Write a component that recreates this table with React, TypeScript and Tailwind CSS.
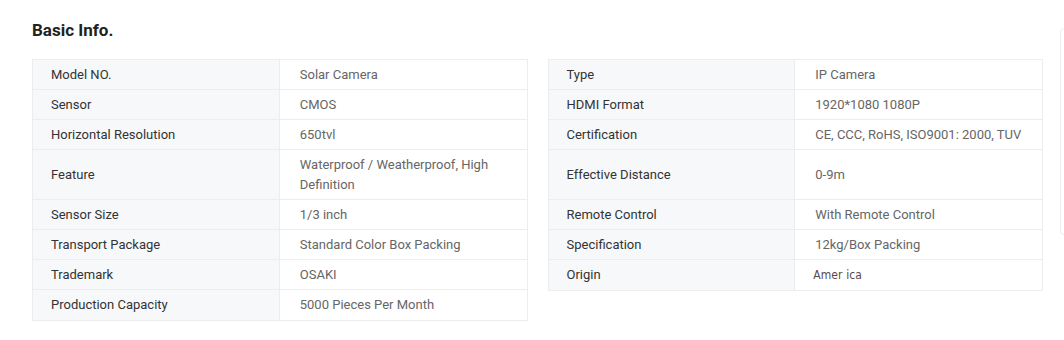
import React from "react";

type Row = { label: string; value: React.ReactNode; tall?: boolean };

const left: Row[] = [
  { label: "Model NO.", value: "Solar Camera" },
  { label: "Sensor", value: "CMOS" },
  { label: "Horizontal Resolution", value: "650tvl" },
  { label: "Feature", value: "Waterproof / Weatherproof, High Definition", tall: true },
  { label: "Sensor Size", value: "1/3 inch" },
  { label: "Transport Package", value: "Standard Color Box Packing" },
  { label: "Trademark", value: "OSAKI" },
  { label: "Production Capacity", value: "5000 Pieces Per Month" },
];

const right: Row[] = [
  { label: "Type", value: "IP Camera" },
  { label: "HDMI Format", value: "1920*1080 1080P" },
  { label: "Certification", value: "CE, CCC, RoHS, ISO9001: 2000, TUV" },
  { label: "Effective Distance", value: "0-9m", tall: true },
  { label: "Remote Control", value: "With Remote Control" },
  { label: "Specification", value: "12kg/Box Packing" },
  {
    label: "Origin",
    value: (
      <span
        className="ml-[-2px] text-[12px] tracking-[0.1px] text-[#5b4a4a]"
        style={{ fontFamily: '"DejaVu Sans Condensed", "Liberation Sans Narrow", sans-serif' }}
      >
        Amer ica
      </span>
    ),
  },
];

function Table({ rows }: { rows: Row[] }) {
  return (
    <div className="flex-1 border border-[#ebedf0] self-start">
      {rows.map((r, i) => (
        <div
          key={r.label}
          className={`grid grid-cols-2 ${i < rows.length - 1 ? "border-b border-[#ebedf0]" : ""} ${r.tall ? "min-h-[50px]" : "min-h-[30px]"}`}
        >
          <div className="flex items-center bg-[#f7f8fa] border-r border-[#ebedf0] pl-[18px] pr-3 text-[13px] leading-5 text-[#333]">
            {r.label}
          </div>
          <div className="flex items-center pl-[20px] pr-[16px] py-[4.5px] text-[13px] leading-5 text-[#666]">
            {r.value}
          </div>
        </div>
      ))}
    </div>
  );
}

export default function App() {
  return (
    <div
      className="w-[1064px] h-[340px] overflow-hidden bg-white flex"
      style={{ fontFamily: 'Roboto, "Liberation Sans", sans-serif' }}
    >
      <div className="w-[1060px] shrink-0 pl-[32px] pr-[17px] pt-[18px]">
        <h2 className="text-[17px] leading-6 font-bold text-[#222] mb-[17px]">Basic Info.</h2>
        <div className="flex gap-[20px] items-start">
          <Table rows={left} />
          <Table rows={right} />
        </div>
      </div>
      <div className="w-[200px] shrink-0 mt-[28px] h-[207px] border border-[#eceef1] rounded-[4px] bg-white" />
    </div>
  );
}
